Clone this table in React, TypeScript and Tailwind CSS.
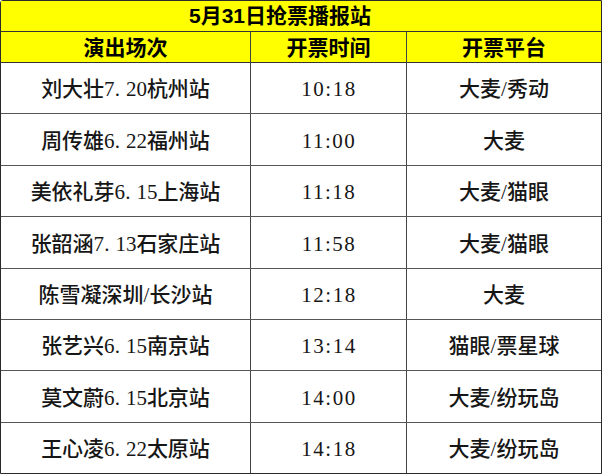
import React from "react";

const rows: [string, string, string][] = [
  ["刘大壮7.20杭州站", "10:18", "大麦/秀动"],
  ["周传雄6.22福州站", "11:00", "大麦"],
  ["美依礼芽6.15上海站", "11:18", "大麦/猫眼"],
  ["张韶涵7.13石家庄站", "11:58", "大麦/猫眼"],
  ["陈雪凝深圳/长沙站", "12:18", "大麦"],
  ["张艺兴6.15南京站", "13:14", "猫眼/票星球"],
  ["莫文蔚6.15北京站", "14:00", "大麦/纷玩岛"],
  ["王心凌6.22太原站", "14:18", "大麦/纷玩岛"],
];

function Show({ text }: { text: string }) {
  const parts = text.split(".");
  if (parts.length === 1) return <>{text}</>;
  return (
    <>
      {parts[0]}
      <span className="mr-[6px]">.</span>
      {parts[1]}
    </>
  );
}

export default function App() {
  const head = { fontFamily: '"Liberation Sans", "Noto Sans CJK SC", sans-serif' };
  const body = { fontFamily: '"Liberation Serif", "Noto Sans CJK SC", serif' };
  return (
    <div className="w-[602px] h-[475px] bg-white">
      <div className="w-[602px] h-[474px] border border-[#2a2a2a] rounded-tl-[3px] flex flex-col">
        <div
          className="h-[31px] shrink-0 bg-[#ffff00] border-b border-[#333] flex items-center justify-center pr-[42px] text-[21px] font-bold text-black"
          style={head}
        >
          5月31日抢票播报站
        </div>
        <div
          className="h-[31px] shrink-0 bg-[#ffff00] border-b border-[#333] grid grid-cols-[250px_156px_1fr] text-[21px] font-bold text-black"
          style={head}
        >
          <div className="border-r border-[#444] flex items-center justify-center">演出场次</div>
          <div className="border-r border-[#444] flex items-center justify-center">开票时间</div>
          <div className="flex items-center justify-center">开票平台</div>
        </div>
        {rows.map((r, i) => (
          <div
            key={i}
            className={`flex-1 grid grid-cols-[250px_156px_1fr] text-[21px] font-medium text-[#161616] ${
              i < rows.length - 1 ? "border-b border-[#555]" : ""
            }`}
            style={body}
          >
            <div className="border-r border-[#444] flex items-center justify-center pt-[4px]">
              <Show text={r[0]} />
            </div>
            <div className="border-r border-[#444] flex items-center justify-center pt-[4px] tracking-[1.5px] pl-[1px]">
              {r[1]}
            </div>
            <div className="flex items-center justify-center pt-[4px]">{r[2]}</div>
          </div>
        ))}
      </div>
    </div>
  );
}
